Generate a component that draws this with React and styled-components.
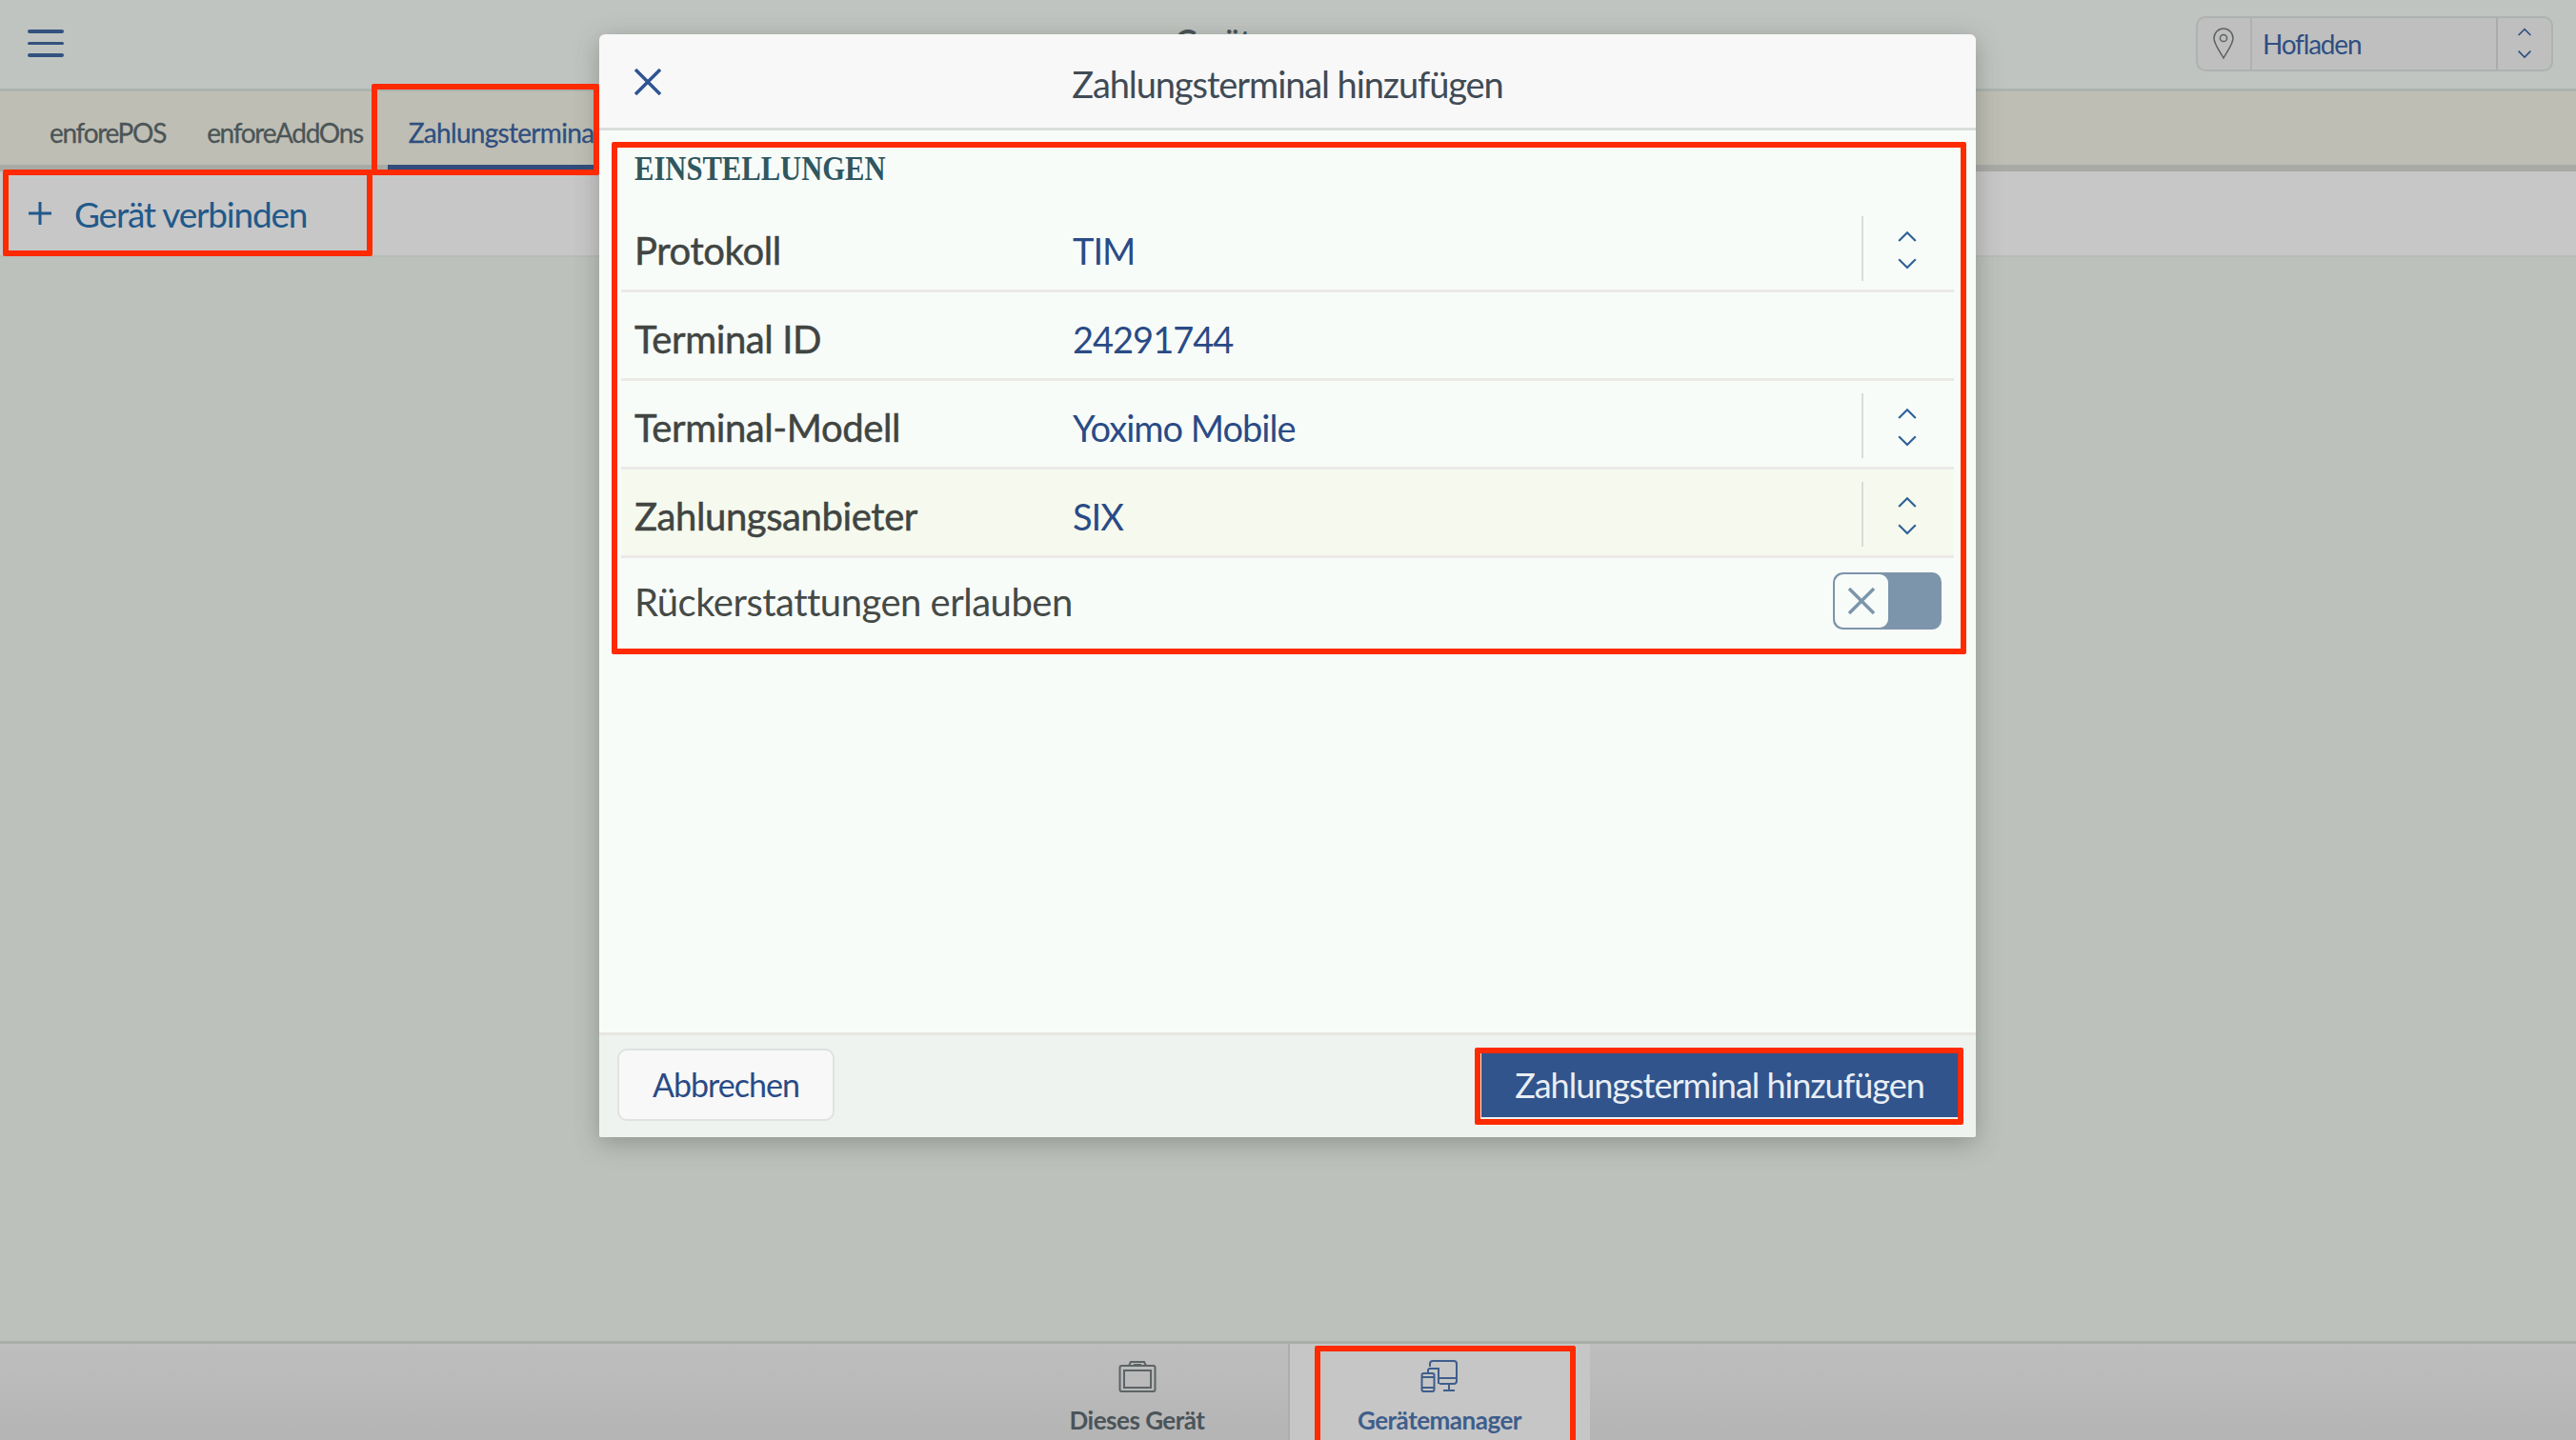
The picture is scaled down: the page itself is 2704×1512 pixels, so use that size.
import React from 'react'
import styled, { createGlobalStyle } from 'styled-components'

const rows = [
  { label: 'Protokoll', value: 'TIM', select: true },
  { label: 'Terminal ID', value: '24291744' },
  { label: 'Terminal-Modell', value: 'Yoximo Mobile', select: true },
  { label: 'Zahlungsanbieter', value: 'SIX', select: true, active: true },
]

function UpDown({ size = 22, gap = 15, color = '#2f6299' }) {
  return (
    <ChevronStack $gap={gap}>
      <svg width={size} height={size * 0.6} viewBox="0 0 20 12" fill="none" stroke={color} strokeWidth="2">
        <path d="M2 10l8-8 8 8" />
      </svg>
      <svg width={size} height={size * 0.6} viewBox="0 0 20 12" fill="none" stroke={color} strokeWidth="2">
        <path d="M2 2l8 8 8-8" />
      </svg>
    </ChevronStack>
  )
}

function App() {
  return (
    <Page>
      <GlobalStyle />
      <TopBar>
        <MenuButton>
          <span /><span /><span />
        </MenuButton>
        <PageTitle>Geräte</PageTitle>
        <LocationSelect>
          <PinBox>
            <svg width="24" height="34" viewBox="0 0 24 34" fill="none" stroke="#5c6362" strokeWidth="1.5">
              <path d="M12 32C7 23 2 17 2 11a10 10 0 0 1 20 0c0 6-5 12-10 21z" />
              <circle cx="12" cy="11" r="3.6" />
            </svg>
          </PinBox>
          <LocationName>Hofladen</LocationName>
          <LocationArrows>
            <UpDown size={16} gap={13} color="#2f4f80" />
          </LocationArrows>
        </LocationSelect>
      </TopBar>

      <TabBar>
        <Tab>enforePOS</Tab>
        <Tab>enforeAddOns</Tab>
        <Tab $active>Zahlungsterminals</Tab>
      </TabBar>

      <ActionBar>
        <ConnectButton>
          <svg width="24" height="24" viewBox="0 0 24 24" stroke="#22598a" strokeWidth="3">
            <path d="M12 0v24M0 12h24" />
          </svg>
          Gerät verbinden
        </ConnectButton>
      </ActionBar>

      <Main />

      <BottomNav>
        <NavItem $width="316px">
          <svg width="40" height="34" viewBox="0 0 40 34" fill="none" stroke="#5d6466" strokeWidth="2">
            <rect x="1.500" y="6" width="37" height="27" rx="2" />
            <rect x="6" y="11" width="28" height="18" />
            <path d="M11 6l2-4h14l2 4M16 5h8" />
          </svg>
          <NavLabel>Dieses Gerät</NavLabel>
        </NavItem>
        <NavItem $active $width="317px">
          <svg width="40" height="34" viewBox="0 0 40 34" fill="none" stroke="#3f5e8c" strokeWidth="2">
            <path d="M10 7V4a3 3 0 0 1 3-3h22a3 3 0 0 1 3 3v18a3 3 0 0 1-3 3H20M8 15V11a2 2 0 0 1 2-2h9v16M20 19h18M24 32h12M30 25v7" />
            <rect x="1.500" y="14" width="13" height="19" rx="2" />
            <path d="M2 18h12M2 29h12" />
          </svg>
          <NavLabel $active>Gerätemanager</NavLabel>
        </NavItem>
      </BottomNav>

      <Modal>
        <ModalHeader>
          <CloseButton>
            <svg width="28" height="28" viewBox="0 0 28 28" stroke="#2f5492" strokeWidth="3.500">
              <path d="M1 1l26 26M27 1L1 27" />
            </svg>
          </CloseButton>
          <ModalTitle>Zahlungsterminal hinzufügen</ModalTitle>
        </ModalHeader>
        <ModalBody>
          <SectionTitle><span>EINSTELLUNGEN</span></SectionTitle>
          {rows.map((row) => (
            <FormRow key={row.label} $active={row.active}>
              <RowLabel>{row.label}</RowLabel>
              <RowValue>{row.value}</RowValue>
              {row.select && (
                <RowArrows>
                  <UpDown />
                </RowArrows>
              )}
            </FormRow>
          ))}
          <ToggleRow>
            <ToggleLabel>Rückerstattungen erlauben</ToggleLabel>
            <Toggle>
              <ToggleKnob>
                <svg width="28" height="28" viewBox="0 0 28 28" stroke="#7d95ab" strokeWidth="3.500">
                  <path d="M1 1l26 26M27 1L1 27" />
                </svg>
              </ToggleKnob>
            </Toggle>
          </ToggleRow>
        </ModalBody>
        <ModalFooter>
          <CancelButton>Abbrechen</CancelButton>
          <SubmitButton>Zahlungsterminal hinzufügen</SubmitButton>
        </ModalFooter>
      </Modal>

      <TabMark />
      <ConnectMark />
      <SettingsMark />
      <SubmitMark />
      <NavMark />
    </Page>
  )
}

export default App

const GlobalStyle = createGlobalStyle`
  html, body {
    margin: 0;
    padding: 0;
    background: #bdc1bc;
  }
  * {
    box-sizing: border-box;
  }
`

const Page = styled.div`
  position: relative;
  width: 2704px;
  height: 1512px;
  overflow: hidden;
  display: flex;
  flex-direction: column;
  font-family: Lato, "Liberation Sans", sans-serif;
  background: #bdc1bc;
`

const TopBar = styled.div`
  height: 96px;
  flex-shrink: 0;
  display: flex;
  align-items: center;
  justify-content: space-between;
  padding: 0 24px 2px 29px;
  background: #c0c4c0;
  border-bottom: 3px solid #adb3ae;
`

const MenuButton = styled.div`
  width: 38px;
  display: flex;
  flex-direction: column;
  gap: 9px;

  span {
    height: 3.500px;
    background: #34527f;
    border-radius: 2px;
  }
`

const PageTitle = styled.div`
  font-size: 32px;
  font-weight: 700;
  color: #4a5355;
  margin-left: 192px;
  margin-top: -6px;
`

const LocationSelect = styled.div`
  width: 375px;
  height: 58px;
  display: flex;
  align-items: stretch;
  background: #bfbfbf;
  border: 2px solid #aeb3b0;
  border-radius: 10px;
`

const PinBox = styled.div`
  width: 57px;
  display: flex;
  align-items: center;
  justify-content: center;
  padding-right: 2px;
  border-right: 2px solid #aeb3b0;
`

const LocationName = styled.div`
  flex: 1;
  display: flex;
  align-items: center;
  padding-left: 11px;
  font-size: 28px;
  letter-spacing: -1.2px;
  color: #2e4f82;
`

const LocationArrows = styled.div`
  width: 58px;
  display: flex;
  align-items: center;
  justify-content: center;
  border-left: 2px solid #a8adab;
`

const ChevronStack = styled.div`
  display: flex;
  flex-direction: column;
  align-items: center;
  gap: ${(p) => p.$gap}px;
`

const TabBar = styled.div`
  height: 84px;
  flex-shrink: 0;
  display: flex;
  padding-left: 31px;
  background: #bfbeb4;
  border-bottom: 7px solid #a8aaa5;
`

const Tab = styled.div`
  height: 84px;
  display: flex;
  align-items: center;
  margin-left: ${(p) => (p.$active ? '4px' : '0')};
  padding: 8px 22px 0 ${(p) => (p.$active ? '22px' : '21px')};
  font-size: 28px;
  letter-spacing: ${(p) => (p.$active ? '-0.7px' : '-1.3px')};
  -webkit-text-stroke: 0.3px currentColor;
  white-space: nowrap;
  color: ${(p) => (p.$active ? '#2f4f80' : '#4b5557')};
  border-bottom: ${(p) => (p.$active ? '7px solid #2f4c7c' : '7px solid transparent')};
`

const ActionBar = styled.div`
  height: 90px;
  flex-shrink: 0;
  display: flex;
  align-items: center;
  padding-left: 30px;
  background: #c7c7c7;
  border-bottom: 2px solid #b8bcb8;
`

const ConnectButton = styled.div`
  display: flex;
  align-items: center;
  gap: 24px;
  font-size: 37px;
  letter-spacing: -1.2px;
  color: #22598a;
`

const Main = styled.div`
  flex: 1;
  background: #bdc1bc;
`

const BottomNav = styled.div`
  height: 104px;
  flex-shrink: 0;
  display: flex;
  justify-content: center;
  background: linear-gradient(#bebebe, #b4b4b4);
  border-top: 3px solid #a9aeaa;
`

const NavItem = styled.div`
  width: ${(p) => p.$width};
  display: flex;
  flex-direction: column;
  align-items: center;
  padding-top: 17px;
  gap: 13px;
  background: ${(p) => (p.$active ? '#c6c6c6' : 'transparent')};
  border-left: ${(p) => (p.$active ? '2px solid #adadad' : 'none')};
`

const NavLabel = styled.div`
  font-size: 26px;
  font-weight: 700;
  letter-spacing: -0.5px;
  white-space: nowrap;
  color: ${(p) => (p.$active ? '#3f5e8c' : '#4b5459')};
`

const Modal = styled.div`
  position: absolute;
  left: 629px;
  top: 36px;
  width: 1445px;
  height: 1158px;
  display: flex;
  flex-direction: column;
  border-radius: 6px 6px 2px 2px;
  overflow: hidden;
  box-shadow: 0 6px 26px rgba(60, 65, 60, 0.35);
`

const ModalHeader = styled.div`
  height: 101px;
  flex-shrink: 0;
  display: flex;
  align-items: center;
  justify-content: center;
  position: relative;
  background: #f8f8f8;
  border-bottom: 3px solid #dcdedc;
`

const CloseButton = styled.div`
  position: absolute;
  left: 37px;
  top: 36px;
  display: flex;
`

const ModalTitle = styled.div`
  padding-top: 5px;
  font-size: 38px;
  letter-spacing: -1.1px;
  color: #404b55;
`

const ModalBody = styled.div`
  flex: 1;
  display: flex;
  flex-direction: column;
  padding: 0 23px;
  background: #f8fcf9;
`

const SectionTitle = styled.div`
  height: 77px;
  display: flex;
  align-items: center;
  padding: 2px 0 0 14px;
  font-family: "Liberation Serif", serif;
  font-size: 36px;
  font-weight: 700;
  color: #2f5760;

  span {
    transform: scaleX(0.85);
    transform-origin: left center;
  }
`

const FormRow = styled.div`
  height: 93px;
  display: flex;
  align-items: center;
  padding-left: 14px;
  background: ${(p) => (p.$active ? '#f6faee' : 'transparent')};
  border-bottom: 3px solid #ebe9e6;
`

const RowLabel = styled.div`
  width: 460px;
  flex-shrink: 0;
  padding-top: 8px;
  font-size: 40px;
  letter-spacing: -0.4px;
  -webkit-text-stroke: 0.5px currentColor;
  color: #404542;
`

const RowValue = styled.div`
  flex: 1;
  padding-top: 8px;
  font-size: 38px;
  letter-spacing: -1px;
  color: #2a4b85;
`

const RowArrows = styled.div`
  width: 97px;
  height: 68px;
  display: flex;
  align-items: center;
  justify-content: center;
  margin-top: 3px;
  padding: 4px 4px 0 0;
  border-left: 2px solid #d9dcd9;
`

const ToggleRow = styled.div`
  height: 93px;
  display: flex;
  align-items: center;
  justify-content: space-between;
  padding: 0 13px 0 14px;
`

const ToggleLabel = styled.div`
  font-size: 40px;
  letter-spacing: -0.5px;
  margin-top: -2px;
  color: #454a47;
`

const Toggle = styled.div`
  width: 114px;
  height: 60px;
  margin-top: -3px;
  background: #7d95ab;
  border-radius: 10px;
  padding: 2px;
`

const ToggleKnob = styled.div`
  width: 56px;
  height: 56px;
  display: flex;
  align-items: center;
  justify-content: center;
  background: #f8fcf9;
  border-radius: 9px;
`

const ModalFooter = styled.div`
  height: 110px;
  flex-shrink: 0;
  display: flex;
  align-items: center;
  justify-content: space-between;
  padding: 0 19px 4px 19px;
  background: #eff3f0;
  border-top: 3px solid #e8e6e2;
`

const CancelButton = styled.div`
  width: 228px;
  height: 76px;
  display: flex;
  align-items: center;
  justify-content: center;
  font-size: 34px;
  letter-spacing: -1px;
  color: #2a4b85;
  background: #f8f8f8;
  border: 2px solid #dfe2df;
  border-radius: 10px;
`

const SubmitButton = styled.div`
  width: 500px;
  height: 68px;
  display: flex;
  align-items: center;
  justify-content: center;
  font-size: 36px;
  letter-spacing: -1px;
  color: #e8eef5;
  background: #31548c;
`

const Mark = styled.div`
  position: absolute;
  border: 6px solid #ff2a00;
  border-radius: 2px;
  pointer-events: none;
`

const TabMark = styled(Mark)`
  left: 390px;
  top: 88px;
  width: 239px;
  height: 96px;
`

const ConnectMark = styled(Mark)`
  left: 3px;
  top: 178px;
  width: 388px;
  height: 91px;
`

const SettingsMark = styled(Mark)`
  left: 642px;
  top: 149px;
  width: 1422px;
  height: 538px;
`

const SubmitMark = styled(Mark)`
  left: 1548px;
  top: 1100px;
  width: 513px;
  height: 81px;
`

const NavMark = styled(Mark)`
  left: 1380px;
  top: 1413px;
  width: 274px;
  height: 110px;
`
